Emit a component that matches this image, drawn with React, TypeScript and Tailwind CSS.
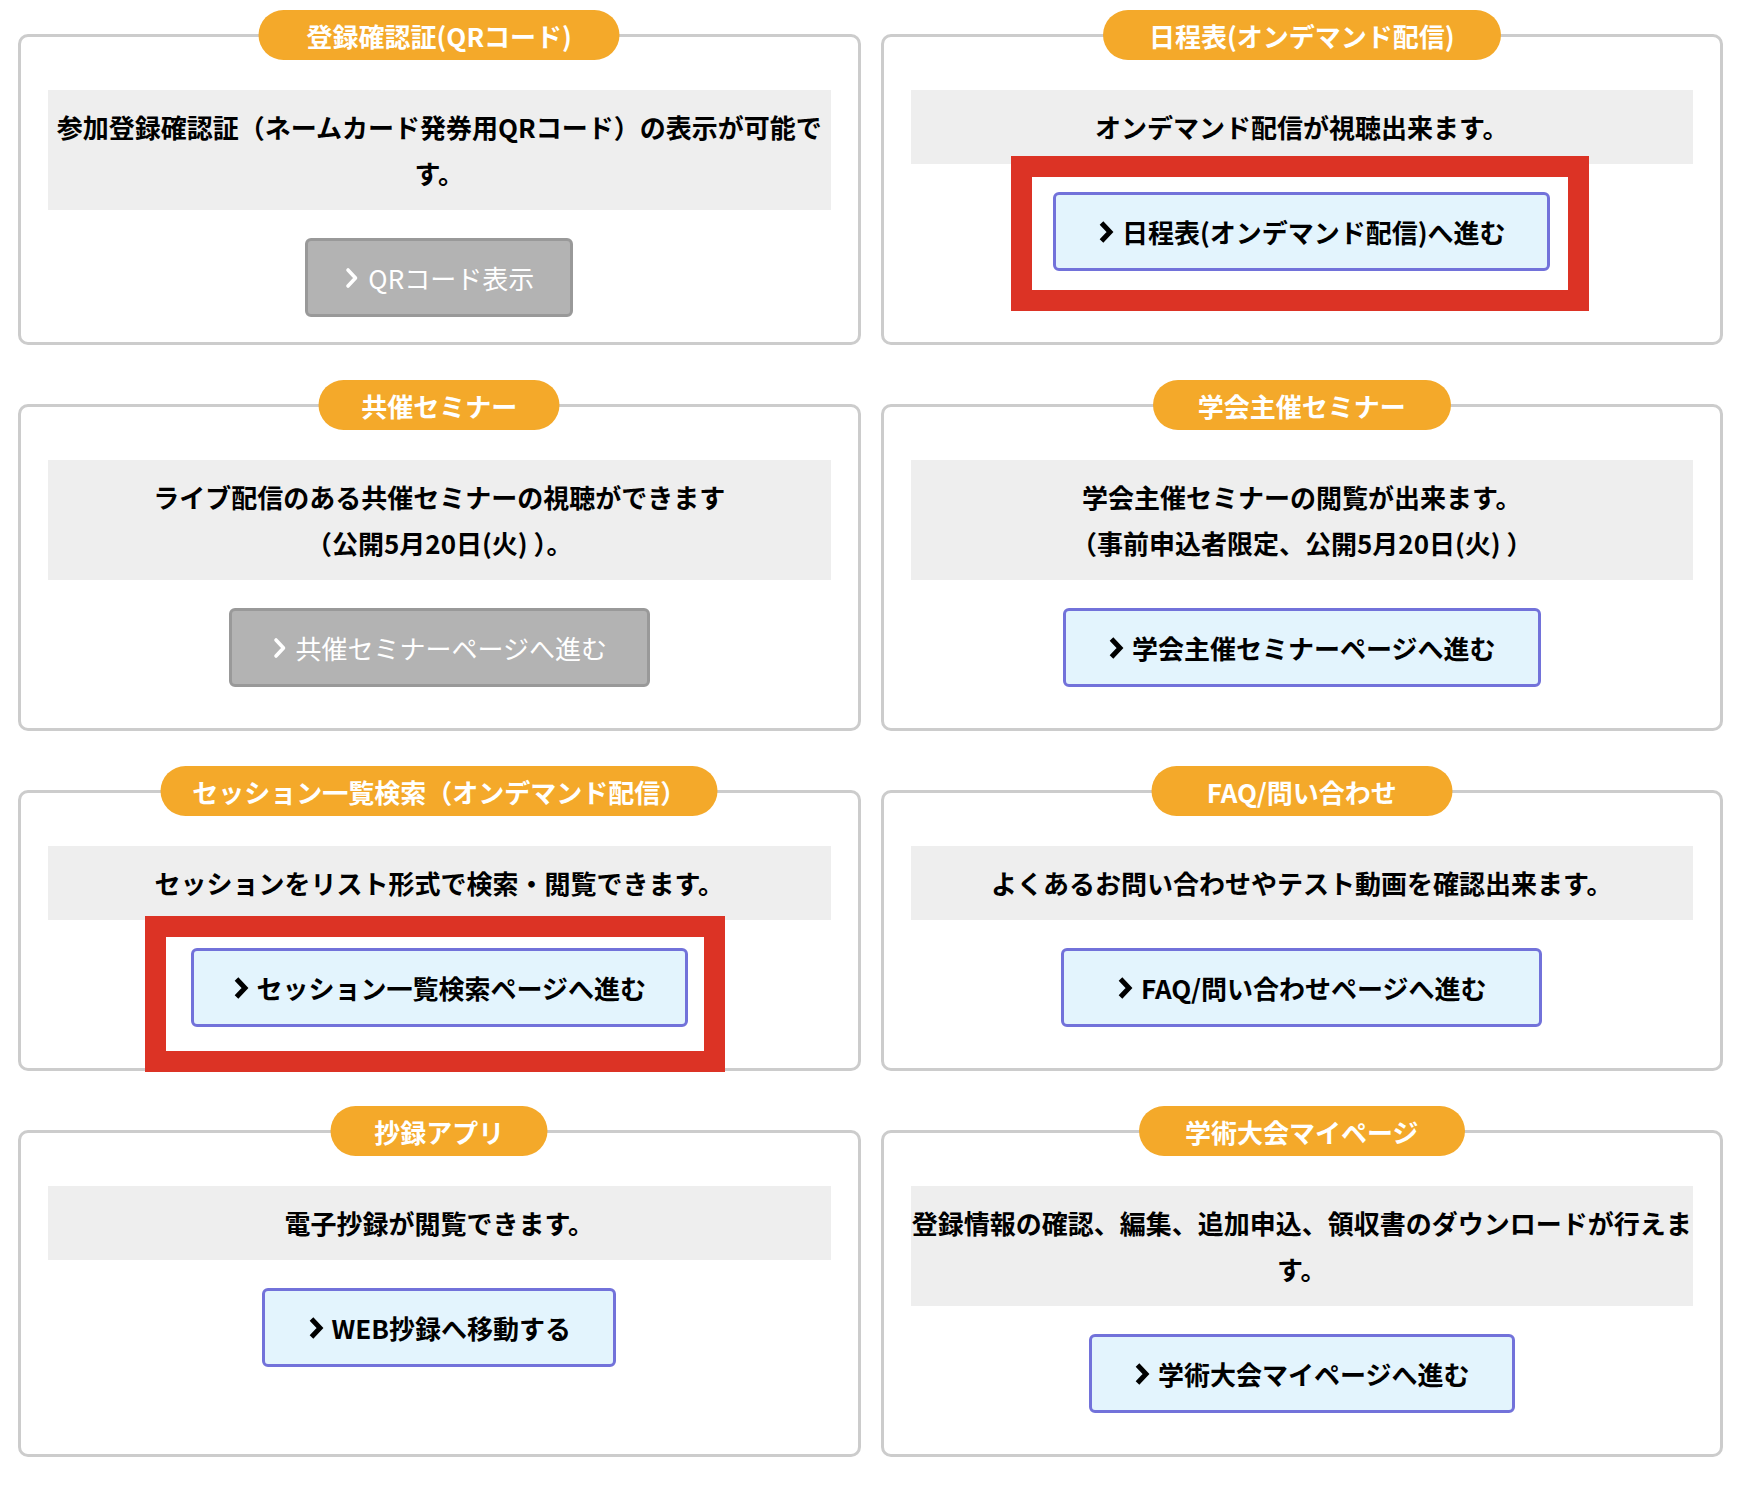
import React from 'react';

type Frame = { cls: string };

type Card = {
    title: string;
    titleW: string;
    desc: React.ReactNode;
    label: string;
    btnW: string;
    gray?: boolean;
    frame?: Frame;
};

// chevron in front of button labels
const Chevron: React.FC<{ bold?: boolean }> = ({ bold }) => (
    <svg width="16" height="24" viewBox="0 0 16 24" className="shrink-0">
        <path
            d={bold ? 'M3.5 3 L12 12 L3.5 21' : 'M4 4 L11.5 12 L4 20'}
            fill="none"
            stroke="currentColor"
            strokeWidth={bold ? 5 : 3.6}
            strokeLinecap={bold ? 'butt' : 'round'}
            strokeLinejoin={bold ? 'miter' : 'round'}
        />
    </svg>
);

const rows: { pb: string; cards: Card[] }[] = [
    {
        pb: 'pb-[25px]',
        cards: [
            {
                title: '登録確認証(QRコード)',
                titleW: 'w-[361px]',
                desc: (<>参加登録確認証（ネームカード発券用QRコード）の表示が可能で<br />す。</>),
                label: 'QRコード表示',
                btnW: 'w-[268px]',
                gray: true,
            },
            {
                title: '日程表(オンデマンド配信)',
                titleW: 'w-[398px]',
                desc: 'オンデマンド配信が視聴出来ます。',
                label: '日程表(オンデマンド配信)へ進む',
                btnW: 'w-[497px]',
                frame: { cls: 'top-[-36px] bottom-[-40px] left-[-42px] right-[-39px]' },
            },
        ],
    },
    {
        pb: 'pb-[41px]',
        cards: [
            {
                title: '共催セミナー',
                titleW: 'w-[241px]',
                desc: (<>ライブ配信のある共催セミナーの視聴ができます<br />（公開5月20日(火) ）。</>),
                label: '共催セミナーページへ進む',
                btnW: 'w-[421px]',
                gray: true,
            },
            {
                title: '学会主催セミナー',
                titleW: 'w-[298px]',
                desc: (<>学会主催セミナーの閲覧が出来ます。<br />（事前申込者限定、公開5月20日(火) ）</>),
                label: '学会主催セミナーページへ進む',
                btnW: 'w-[478px]',
            },
        ],
    },
    {
        pb: 'pb-[41px]',
        cards: [
            {
                title: 'セッション一覧検索（オンデマンド配信）',
                titleW: 'w-[557px]',
                desc: 'セッションをリスト形式で検索・閲覧できます。',
                label: 'セッション一覧検索ページへ進む',
                btnW: 'w-[497px]',
                frame: { cls: 'top-[-32px] bottom-[-45px] left-[-46px] right-[-37px]' },
            },
            {
                title: 'FAQ/問い合わせ',
                titleW: 'w-[301px]',
                desc: 'よくあるお問い合わせやテスト動画を確認出来ます。',
                label: 'FAQ/問い合わせページへ進む',
                btnW: 'w-[481px]',
            },
        ],
    },
    {
        pb: 'pb-[41px]',
        cards: [
            {
                title: '抄録アプリ',
                titleW: 'w-[217px]',
                desc: '電子抄録が閲覧できます。',
                label: 'WEB抄録へ移動する',
                btnW: 'w-[354px]',
            },
            {
                title: '学術大会マイページ',
                titleW: 'w-[326px]',
                desc: (<>登録情報の確認、編集、追加申込、領収書のダウンロードが行えま<br />す。</>),
                label: '学術大会マイページへ進む',
                btnW: 'w-[426px]',
            },
        ],
    },
];

const MenuCard: React.FC<{ card: Card; pb: string }> = ({ card, pb }) => {
    const btnCls = card.gray
        ? 'bg-[#b3b3b3] border-[#999999] text-white font-normal'
        : 'bg-[#e3f4fd] border-[#7272da] text-black font-bold';

    return (
        <div className={`relative flex flex-col items-center rounded-[10px] border-[3px] border-[#cccccc] bg-white px-[27px] pt-[53px] ${pb}`}>
            {/* label pill on the top border */}
            <div className={`absolute left-1/2 top-[-27px] -translate-x-1/2 h-[50px] ${card.titleW} flex items-center justify-center rounded-full bg-[#f4a92a] text-[26px] font-bold text-white whitespace-nowrap`}>
                {card.title}
            </div>

            <div className="w-full bg-[#eeeeee] py-[14px] text-center text-[26px] leading-[46px] font-bold text-black whitespace-nowrap">
                {card.desc}
            </div>

            <div className="relative mt-[28px]">
                {card.frame && (
                    <div className={`absolute ${card.frame.cls} border-[21px] border-[#dc3325] bg-white`} />
                )}
                <div className={`relative z-10 h-[79px] ${card.btnW} flex items-center justify-center gap-[8px] rounded-[6px] border-[3px] text-[26px] whitespace-nowrap ${btnCls}`}>
                    <Chevron bold={!card.gray} />
                    <span>{card.label}</span>
                </div>
            </div>
        </div>
    );
};

const App: React.FC = () => {
    return (
        <div
            className="min-h-screen bg-white pl-[18px] pr-[21px] pt-[34px] pb-[36px]"
            style={{ fontFamily: '"Noto Sans CJK JP", "Noto Sans", sans-serif' }}
        >
            <div className="grid grid-cols-2 gap-x-[20px] gap-y-[59px]">
                {rows.map((row, i) =>
                    row.cards.map((card, j) => (
                        <MenuCard key={`${i}-${j}`} card={card} pb={row.pb} />
                    ))
                )}
            </div>
        </div>
    );
};

export default App;
